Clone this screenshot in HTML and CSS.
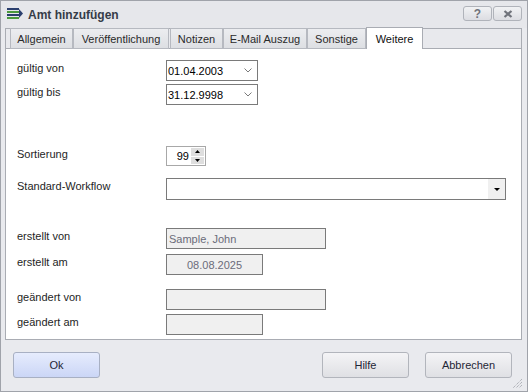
FILE: index.html
```html
<!DOCTYPE html>
<html lang="de">
<head>
<meta charset="UTF-8">
<title>Amt hinzufügen</title>
<link rel="stylesheet" href="styles.css">
</head>
<body>
	<div class="window">
		<div class="titlebar">
			<svg class="app-icon" width="16" height="12" viewBox="0 0 16 12">
				<rect x="0" y="0" width="12" height="2" fill="#2b3f6e"/>
				<rect x="0" y="3" width="12" height="2" fill="#4a9a3c"/>
				<rect x="0" y="6" width="12" height="2" fill="#2b3f6e"/>
				<rect x="0" y="9" width="12" height="2" fill="#4a9a3c"/>
				<path d="M12 1 L16 5.5 L12 10 Z" fill="#2b3f6e"/>
			</svg>
			<span class="title">Amt hinzufügen</span>
			<div class="caption-buttons">
				<span class="cbtn">?</span>
				<span class="cbtn">
					<svg width="10" height="8" viewBox="0 0 10 8"><path d="M1.5 1 L8.5 7 M8.5 1 L1.5 7" stroke="#70737b" stroke-width="2.2"/></svg>
				</span>
			</div>
		</div>

		<div class="tabcontrol">
			<div class="tabhead">
				<div class="tab t-allg">Allgemein</div>
				<div class="tab t-veroe">Veröffentlichung</div>
				<div class="tab t-notiz">Notizen</div>
				<div class="tab t-mail">E-Mail Auszug</div>
				<div class="tab t-sonst">Sonstige</div>
				<div class="tab t-weit active">Weitere</div>
			</div>
			<div class="page">
				<div class="row r-von">
					<label>gültig von</label>
					<div class="field date">01.04.2003
						<svg class="chev" width="8" height="5" viewBox="0 0 8 5"><path d="M0.5 0.5 L4 4 L7.5 0.5" fill="none" stroke="#7a7a7a"/></svg>
					</div>
				</div>
				<div class="row r-bis">
					<label>gültig bis</label>
					<div class="field date">31.12.9998
						<svg class="chev" width="8" height="5" viewBox="0 0 8 5"><path d="M0.5 0.5 L4 4 L7.5 0.5" fill="none" stroke="#7a7a7a"/></svg>
					</div>
				</div>
				<div class="row r-sort">
					<label>Sortierung</label>
					<div class="spin">
						<span class="spin-val">99</span>
						<span class="spin-btns">
							<span class="sb"><svg width="5" height="3" viewBox="0 0 5 3"><path d="M0 3 L2.5 0 L5 3 Z" fill="#000"/></svg></span>
							<span class="sb"><svg width="5" height="3" viewBox="0 0 5 3"><path d="M0 0 L2.5 3 L5 0 Z" fill="#000"/></svg></span>
						</span>
					</div>
				</div>
				<div class="row r-wf">
					<label>Standard-Workflow</label>
					<div class="field combo">
						<span class="combo-btn"><svg width="6" height="3" viewBox="0 0 6 3"><path d="M0 0 L6 0 L3 3 Z" fill="#000"/></svg></span>
					</div>
				</div>
				<div class="row r-ev">
					<label>erstellt von</label>
					<div class="field ro wide">Sample, John</div>
				</div>
				<div class="row r-ea">
					<label>erstellt am</label>
					<div class="field ro short center">08.08.2025</div>
				</div>
				<div class="row r-gv">
					<label>geändert von</label>
					<div class="field ro wide"></div>
				</div>
				<div class="row r-ga">
					<label>geändert am</label>
					<div class="field ro short"></div>
				</div>
			</div>
		</div>

		<div class="footer">
			<button class="btn ok">Ok</button>
			<button class="btn help">Hilfe</button>
			<button class="btn">Abbrechen</button>
		</div>

		<svg class="grip" width="12" height="12" viewBox="0 0 12 12">
			<path d="M11 2 L2 11 M11 5 L5 11 M11 8 L8 11" stroke="#9a9da4" stroke-width="1" stroke-dasharray="1 1"/>
		</svg>
	</div>
</body>
</html>
```

FILE: styles.css
```css
*{
	box-sizing:border-box;
}
body{
	margin:0;
	font-family:"Liberation Sans", Arial, sans-serif;
	font-size:11px;
	color:#1e1e1e;
}
.window{
	position:relative;
	width:528px;
	height:392px;
	border:1px solid #a0a3aa;
	background:#e9eaee;
	display:flex;
	flex-direction:column;
}

/* title bar */
.titlebar{
	height:27px;
	flex:none;
	display:flex;
	align-items:center;
	padding-left:6px;
	background:#e6e7eb;
}
.app-icon{
	margin-top:-1px;
}
.title{
	margin-left:5px;
	font-size:12px;
	font-weight:bold;
	color:#353c48;
}
.caption-buttons{
	margin-left:auto;
	margin-right:5px;
	align-self:flex-start;
	margin-top:5px;
	display:flex;
	gap:1px;
}
.cbtn{
	width:29px;
	height:15px;
	border:1px solid #b0b3ba;
	border-radius:3px;
	background:linear-gradient(#f1f2f4,#dcdde2);
	display:flex;
	align-items:center;
	justify-content:center;
	font-weight:bold;
	font-size:12px;
	color:#70737b;
}

/* tabs */
.tabcontrol{
	flex:none;
	height:312px;
	margin:0 5px 0 4px;
	border:1px solid #a9acb3;
	background:#e8e9ed;
	display:flex;
	flex-direction:column;
}
.tabhead{
	height:20px;
	flex:none;
	display:flex;
	padding-left:4px;
	border-bottom:1px solid #a9acb3;
}
.tab{
	height:21px;
	margin-top:-1px;
	border:1px solid #b6b9c0;
	background:linear-gradient(#ecedf0,#dddfe3);
	color:#2a2a2a;
	display:flex;
	align-items:center;
	justify-content:center;
	font-size:11px;
	white-space:nowrap;
}
.t-allg{ width:63px; }
.t-veroe{ width:96px; margin-left:0; }
.t-notiz{ width:53px; margin-left:1px; }
.t-mail{ width:84px; }
.t-sonst{ width:59px; }
.t-weit{ width:57px; }
.tab.active{
	height:23px;
	margin-top:-2px;
	border-color:#a9acb3;
	border-bottom:none;
	background:#fff;
	color:#111;
}
.page{
	flex:1;
	background:#fff;
	padding:11px 0 0 11px;
}

/* form rows */
.row{
	display:flex;
	align-items:flex-start;
}
.row label{
	width:149px;
	flex:none;
	padding-top:2px;
	line-height:13px;
}
.r-bis{ margin-top:3px; }
.r-sort{ margin-top:41px; }
.r-wf{ margin-top:12px; }
.r-ev{ margin-top:28px; }
.r-ea{ margin-top:5px; }
.r-gv{ margin-top:14px; }
.r-ga{ margin-top:4px; }

.field{
	height:21px;
	border:1px solid #7a7a7a;
	display:flex;
	align-items:center;
	padding-left:1px;
	color:#000;
}
.date{
	width:92px;
}
.chev{
	margin-left:auto;
	margin-right:5px;
}
.spin{
	width:40px;
	height:20px;
	border:1px solid #a8a8a8;
	display:flex;
	align-items:center;
	padding:1px;
}
.spin-val{
	flex:1;
	text-align:right;
	padding-right:2px;
	color:#000;
}
.spin-btns{
	width:13px;
	height:100%;
	display:flex;
	flex-direction:column;
	gap:1px;
}
.sb{
	flex:1;
	background:#dedede;
	display:flex;
	align-items:center;
	justify-content:center;
}
.combo{
	width:340px;
	height:22px;
	padding:0;
	justify-content:flex-end;
}
.combo-btn{
	width:17px;
	height:100%;
	background:#f0f0f0;
	display:flex;
	align-items:center;
	justify-content:center;
}
.ro{
	background:#f0f0f0;
	color:#6b6c7a;
	padding-left:2px;
}
.wide{
	width:160px;
}
.short{
	width:97px;
}
.center{
	justify-content:center;
	padding-left:0;
}

/* footer */
.footer{
	flex:1;
	display:flex;
	align-items:flex-start;
	padding:12px 15px 0 12px;
}
.btn{
	width:87px;
	height:26px;
	border:1px solid #b2b5bc;
	border-radius:3px;
	background:linear-gradient(#f4f4f6,#dfe0e4);
	font-family:"Liberation Sans", Arial, sans-serif;
	font-size:11px;
	color:#1f2636;
	padding:0;
}
.btn.ok{
	border-color:#a8b0c3;
	background:linear-gradient(#e6ecfd,#cbd6f6);
}
.btn.help{
	margin-left:auto;
	margin-right:16px;
}
.grip{
	position:absolute;
	right:4px;
	bottom:2px;
}
```
